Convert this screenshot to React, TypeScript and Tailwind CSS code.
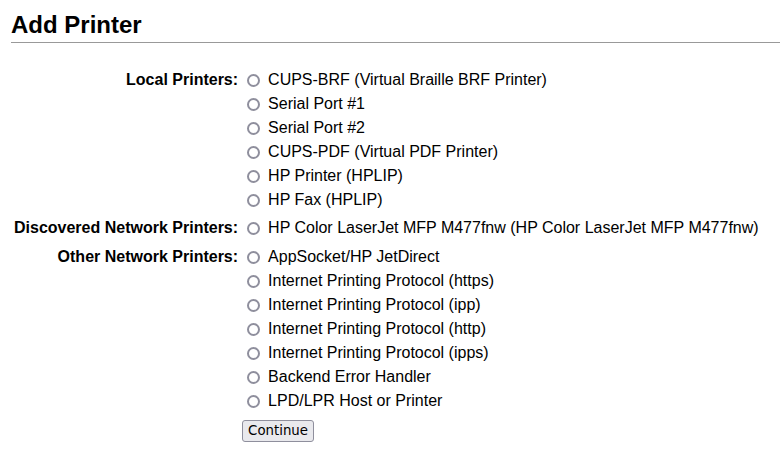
import { useState } from 'react';

const groups = [
  {
    label: 'Local Printers:',
    items: [
      'CUPS-BRF (Virtual Braille BRF Printer)',
      'Serial Port #1',
      'Serial Port #2',
      'CUPS-PDF (Virtual PDF Printer)',
      'HP Printer (HPLIP)',
      'HP Fax (HPLIP)',
    ],
  },
  {
    label: 'Discovered Network Printers:',
    items: ['HP Color LaserJet MFP M477fnw (HP Color LaserJet MFP M477fnw)'],
  },
  {
    label: 'Other Network Printers:',
    items: [
      'AppSocket/HP JetDirect',
      'Internet Printing Protocol (https)',
      'Internet Printing Protocol (ipp)',
      'Internet Printing Protocol (http)',
      'Internet Printing Protocol (ipps)',
      'Backend Error Handler',
      'LPD/LPR Host or Printer',
    ],
  },
];

export default function App() {
  const [selected, setSelected] = useState('');

  return (
    <div className="min-h-screen bg-white pl-[11px] text-black font-['Liberation_Sans',Arial,sans-serif]">
      <h2 className="pt-[13px] pb-[5px] text-[24px] font-bold leading-[24px] border-b border-[#999]">
        Add Printer
      </h2>

      <form className="mt-[23px] grid grid-cols-[auto_1fr] text-[16px] leading-[24px]">
        {groups.map((g, i) => (
          <div key={g.label} className="contents">
            <div className={`${i === 2 ? 'pt-[3px]' : 'pt-[2px]'} pb-[2px] pl-[3px] pr-[4px] text-right font-bold`}>{g.label}</div>
            <div className={`${i === 2 ? 'pt-[3px]' : 'pt-[2px]'} pb-[2px]`}>
              {g.items.map((item) => (
                <label key={item} className="flex items-center h-[24px] whitespace-nowrap">
                  <input
                    type="radio"
                    name="device"
                    checked={selected === item}
                    onChange={() => setSelected(item)}
                    className="appearance-none ml-[5px] mr-[8px] mt-[1px] w-[13px] h-[13px] rounded-full border-2 border-[#8f8f9d] bg-white checked:border-[4px] checked:border-[#0060df]"
                  />
                  {item}
                </label>
              ))}
            </div>
          </div>
        ))}
        <div />
        <div className="pt-[3px]">
          <button
            type="button"
            className="h-[22px] px-[5px] rounded-[3px] border border-[#8f8f9d] bg-[#e9e9ed] text-[13.33px] leading-[18px] font-['DejaVu_Sans',sans-serif] text-black"
          >
            Continue
          </button>
        </div>
      </form>
    </div>
  );
}
